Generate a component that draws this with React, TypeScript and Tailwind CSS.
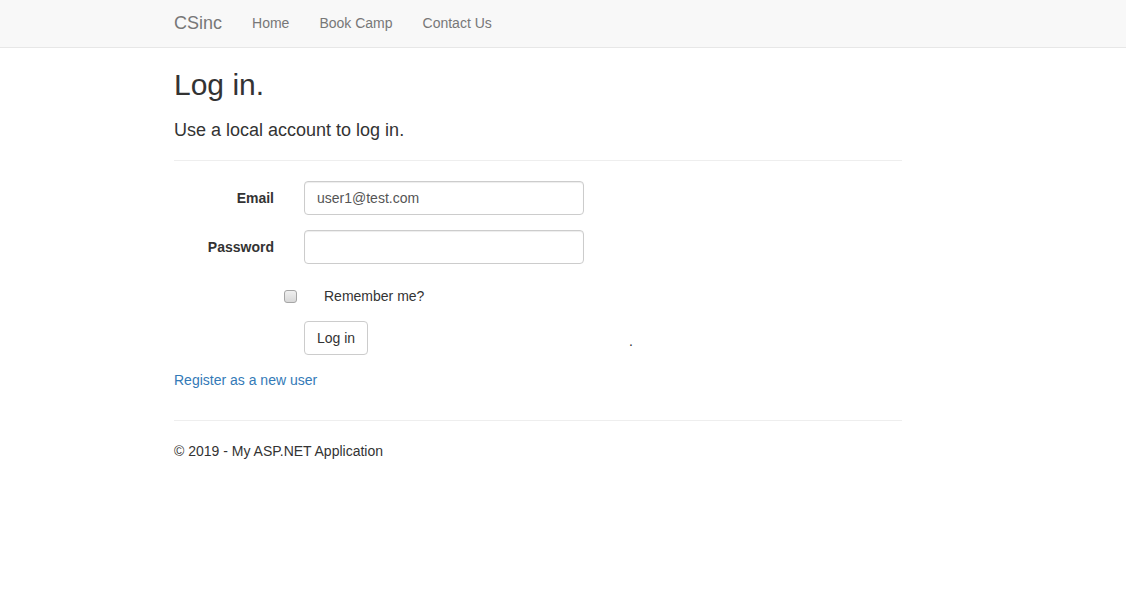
import React from "react";

export default function App() {
  return (
    <div className="min-h-[592px] bg-white text-[#333] text-[14px] leading-[20px]" style={{ fontFamily: '"Liberation Sans", Arial, Helvetica, sans-serif' }}>
      <div className="h-[48px] bg-[#f8f8f8] border-b border-[#e7e7e7] flex items-center pb-[2px]">
        <div className="ml-[174px] flex items-center">
          <span className="text-[18px] leading-[20px] text-[#777] pr-[15px]">CSinc</span>
          <span className="px-[15px] text-[#777]">Home</span>
          <span className="px-[15px] text-[#777]">Book Camp</span>
          <span className="px-[15px] text-[#777]">Contact Us</span>
        </div>
      </div>
      <div className="ml-[174px] w-[728px]">
        <h2 className="mt-[20px] text-[30px] leading-[33px] font-normal">Log in.</h2>
        <h4 className="mt-[19px] text-[18px] leading-[20px] font-normal">Use a local account to log in.</h4>
        <div className="mt-[20px] border-t border-[#eee]" />
        <div className="mt-[20px] flex items-start">
          <label className="w-[100px] text-right font-bold pt-[7px]">Email</label>
          <div className="ml-[30px] w-[280px] h-[34px] border border-[#ccc] rounded-[4px] px-[12px] py-[6px] text-[#555] shadow-[inset_0_1px_1px_rgba(0,0,0,0.075)]">user1@test.com</div>
        </div>
        <div className="mt-[15px] flex items-start">
          <label className="w-[100px] text-right font-bold pt-[7px]">Password</label>
          <div className="ml-[30px] w-[280px] h-[34px] border border-[#ccc] rounded-[4px] shadow-[inset_0_1px_1px_rgba(0,0,0,0.075)]" />
        </div>
        <div className="mt-[15px] h-[27px] pt-[7px] flex items-center pl-[110px]">
          <div className="w-[13px] h-[13px] border border-[#a6a6a6] rounded-[3px] bg-gradient-to-b from-[#f0f0f0] to-[#d8d8d8] mt-[1px]" />
          <span className="ml-[27px]">Remember me?</span>
        </div>
        <div className="mt-[15px] flex items-start pl-[130px]">
          <div className="h-[34px] w-[64px] border border-[#ccc] rounded-[4px] flex items-center justify-center bg-white">Log in</div>
          <span className="ml-[261px] mt-[10px] leading-[20px]">.</span>
        </div>
        <p className="mt-[15px] text-[#337ab7]">Register as a new user</p>
        <div className="mt-[30px] border-t border-[#eee]" />
        <p className="mt-[20px]">© 2019 - My ASP.NET Application</p>
      </div>
    </div>
  );
}
